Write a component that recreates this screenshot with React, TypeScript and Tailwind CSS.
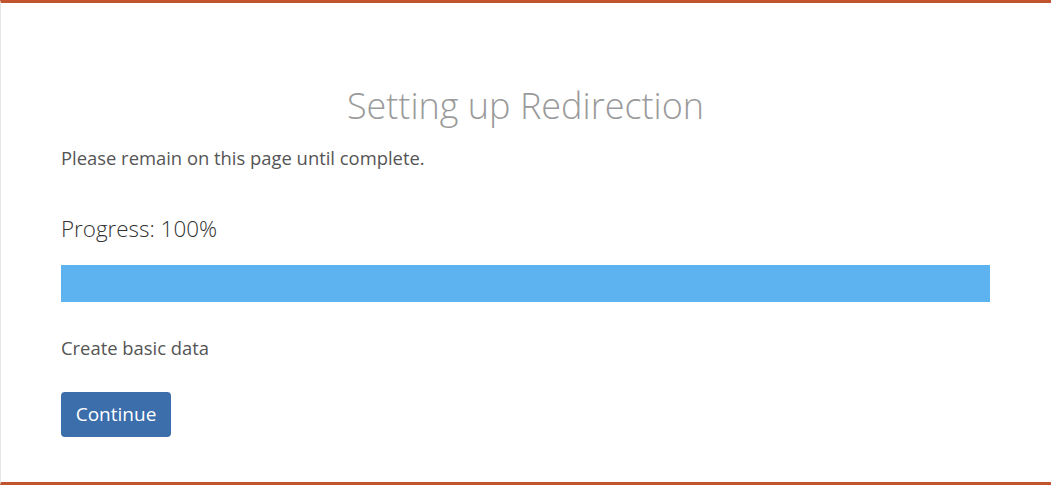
import React from "react";

export default function App() {
  return (
    <div className="h-[485px] w-[1051px] overflow-hidden bg-white border-l border-l-[#e6e6e6] border-t-[3px] border-t-[#c1532d] border-b-[3px] border-b-[#c1532d] font-['Open_Sans',sans-serif]">
      <div className="pl-[60px] pr-[61px] pt-[78px]">
        <h1 className="text-center text-[36px] leading-[50px] font-light text-[#9a9a9a]">
          Setting up Redirection
        </h1>
        <p className="mt-[15px] text-[18.4px] leading-[24px] text-[#555]">
          Please remain on this page until complete.
        </p>
        <p className="mt-[44px] text-[22.4px] leading-[30px] font-light text-[#333]">
          Progress: 100%
        </p>
        <div className="mt-[21px] h-[37px] w-full bg-[#5cb3f0]" />
        <p className="mt-[34px] text-[18.4px] leading-[24px] text-[#555]">
          Create basic data
        </p>
        <button className="mt-[32px] h-[45px] w-[110px] rounded-[4px] bg-[#3b6eab] text-[19px] text-white">
          Continue
        </button>
      </div>
    </div>
  );
}
